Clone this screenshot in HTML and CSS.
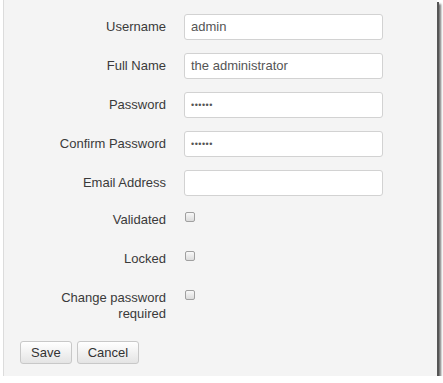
FILE: index.html
```html
<!DOCTYPE html>
<html lang="en">
<head>
    <meta charset="UTF-8">
    <title>Edit User</title>
    <link rel="stylesheet" href="styles.css">
</head>
<body>
    <div class="panel">
        <form class="user-form">
            <div class="row">
                <label>Username</label>
                <div class="field">admin</div>
            </div>
            <div class="row">
                <label>Full Name</label>
                <div class="field">the administrator</div>
            </div>
            <div class="row">
                <label>Password</label>
                <div class="field dots">&bull;&bull;&bull;&bull;&bull;&bull;</div>
            </div>
            <div class="row">
                <label>Confirm Password</label>
                <div class="field dots">&bull;&bull;&bull;&bull;&bull;&bull;</div>
            </div>
            <div class="row">
                <label>Email Address</label>
                <div class="field"></div>
            </div>
            <div class="row check-row">
                <label>Validated</label>
                <span class="checkbox"></span>
            </div>
            <div class="row check-row">
                <label>Locked</label>
                <span class="checkbox"></span>
            </div>
            <div class="row check-row">
                <label>Change password<br>required</label>
                <span class="checkbox"></span>
            </div>
            <div class="actions">
                <span class="button">Save</span>
                <span class="button">Cancel</span>
            </div>
        </form>
    </div>
</body>
</html>
```

FILE: styles.css
```css
* {
    margin: 0;
    padding: 0;
    box-sizing: border-box;
}

body {
    font-family: 'Liberation Sans', Arial, sans-serif;
    font-size: 13px;
    color: #3a3a3a;
    background-color: #fff;
}

.panel {
    margin-left: 3px;
    width: 434px;
    height: 376px;
    background-color: #f4f4f4;
    border-left: 1px solid #dcdcdc;
    box-shadow: 2px 2px 0 #555, 4px 4px 2px rgba(0, 0, 0, 0.55);
}

.user-form {
    padding: 14px 0 0 16px;
}

.row {
    display: grid;
    grid-template-columns: 146px 199px;
    column-gap: 18px;
    min-height: 26px;
    margin-bottom: 13px;
}

.row label {
    text-align: right;
    line-height: 16px;
    padding-top: 5px;
}

.field {
    height: 26px;
    background-color: #fff;
    border: 1px solid #d2d2d2;
    border-radius: 3px;
    padding: 0 6px;
    line-height: 24px;
    color: #555;
}

.dots {
    font-size: 9px;
    letter-spacing: 0.5px;
}

.check-row label {
    padding-top: 3px;
}

.checkbox {
    display: block;
    width: 10px;
    height: 10px;
    margin: 3px 0 0 1px;
    border: 1px solid #a0a0a0;
    border-radius: 2px;
    background: linear-gradient(#f8f8f8, #dcdcdc);
}

.actions {
    display: flex;
    gap: 5px;
    margin-top: 19px;
}

.button {
    display: block;
    height: 23px;
    line-height: 21px;
    padding: 0 10px;
    border: 1px solid #c8c8c8;
    border-radius: 3px;
    background: linear-gradient(#ffffff, #e4e4e4);
    color: #333;
    font-size: 13px;
}
```
